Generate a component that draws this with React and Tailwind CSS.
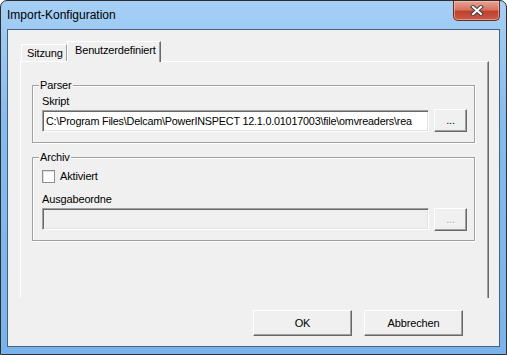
import React from "react";

const raised =
  "border border-t-white border-l-white border-r-[#696969] border-b-[#696969] shadow-[inset_-1px_-1px_0_#a0a0a0] bg-[#f0f0f0]";
const sunken =
  "border border-t-[#a0a0a0] border-l-[#a0a0a0] border-r-white border-b-white shadow-[inset_1px_1px_0_#696969,inset_-1px_-1px_0_#e3e3e3]";
const etched =
  "relative border border-[#a0a0a0] shadow-[1px_1px_0_#fff,inset_1px_1px_0_#fff]";

const GroupBox = ({ title, className, children }) => (
  <div className={`${etched} ${className}`}>
    <span className="absolute left-[6px] top-[-7px] bg-[#f0f0f0] px-[1px]">{title}</span>
    {children}
  </div>
);

const CloseButton = () => (
  <div className="flex h-[20px] w-[47px] items-center justify-center rounded-b-[5px] border border-t-0 border-[#6b2a22] bg-[linear-gradient(180deg,#e8a496_0%,#d77563_45%,#c0402f_55%,#c95a45_100%)] shadow-[inset_0_0_0_1px_rgba(255,210,200,0.5)]">
    <svg width="14" height="11" viewBox="0 0 14 11">
      <path d="M3 2 L11 9 M11 2 L3 9" stroke="#404040" strokeWidth="4" strokeLinecap="square" />
      <path d="M3 2 L11 9 M11 2 L3 9" stroke="#ffffff" strokeWidth="2" strokeLinecap="square" />
    </svg>
  </div>
);

export default function App() {
  const path = "C:\\Program Files\\Delcam\\PowerINSPECT 12.1.0.01017003\\file\\omvreaders\\rea";

  return (
    <div className="h-[355px] w-[507px] bg-white font-['Liberation_Sans',Arial,sans-serif] text-[11px] leading-[13px] tracking-[-0.15px] text-black">
      <div className="flex h-full flex-col rounded-t-[7px] border border-[#2e2e2e] bg-[linear-gradient(180deg,#a6cff5_0%,#86bbee_35%,#7ab3eb_100%)] px-[6px] pb-[7px]">
        {/* title bar */}
        <div className="flex h-[28px] items-start justify-between">
          <span className="pt-[7px] text-[12px] leading-[14px] tracking-normal">Import-Konfiguration</span>
          <CloseButton />
        </div>

        {/* client area */}
        <div className="flex flex-1 flex-col border border-[#44617e] bg-[#f0f0f0]">
          {/* tabs */}
          <div className="ml-[13px] mt-[11px] flex h-[20px] items-end">
            <div className="h-[17px] w-[46px] border-l border-t border-r border-l-white border-t-white border-r-[#a0a0a0] pl-[5px] pt-[2px]">
              Sitzung
            </div>
            <div className="relative z-10 -mb-px h-[21px] w-[94px] border-l border-t border-r border-l-white border-t-white border-r-[#696969] bg-[#f0f0f0] pl-[7px] pt-[2px] shadow-[inset_-1px_0_0_#a0a0a0]">
              Benutzerdefiniert
            </div>
          </div>

          {/* tab panel */}
          <div className="ml-[12px] h-[237px] w-[469px] border-l border-t border-r border-l-white border-t-white border-r-[#696969] pl-[11px] pt-[23px] shadow-[inset_-1px_0_0_#a0a0a0]">
            <GroupBox title="Parser" className="h-[58px] w-[443px] pl-[9px] pt-[9px]">
              <div>Skript</div>
              <div className="mt-[1px] flex items-start gap-[5px]">
                <div className={`${sunken} mt-[1px] h-[22px] w-[387px] whitespace-nowrap bg-white pl-[3px] pt-[4px] text-[10.8px] tracking-[-0.2px]`}>
                  {path}
                </div>
                <div className={`${raised} flex h-[23px] w-[33px] items-center justify-center pb-[1px]`}>...</div>
              </div>
            </GroupBox>

            <GroupBox title="Archiv" className="mt-[14px] h-[84px] w-[443px] pl-[9px] pt-[12px]">
              <div className="flex h-[13px] items-center gap-[5px]">
                <div className="h-[13px] w-[13px] border border-[#8e8f8f] bg-white shadow-[inset_1px_1px_0_#dedede]" />
                <span>Aktiviert</span>
              </div>
              <div className="mt-[10px] whitespace-nowrap">Ausgabeordne</div>
              <div className="mt-[2px] flex items-start gap-[5px]">
                <div className={`${sunken} h-[22px] w-[387px] bg-[#f0f0f0]`} />
                <div className={`${raised} flex h-[23px] w-[33px] items-center justify-center pb-[1px] text-[#a0a0a0] [text-shadow:1px_1px_0_#fff]`}>
                  ...
                </div>
              </div>
            </GroupBox>
          </div>

          {/* buttons */}
          <div className="mt-[12px] flex justify-end gap-[12px] pr-[36px]">
            <div className={`${raised} flex h-[26px] w-[99px] items-center justify-center`}>OK</div>
            <div className={`${raised} flex h-[26px] w-[99px] items-center justify-center`}>Abbrechen</div>
          </div>
        </div>
      </div>
    </div>
  );
}
